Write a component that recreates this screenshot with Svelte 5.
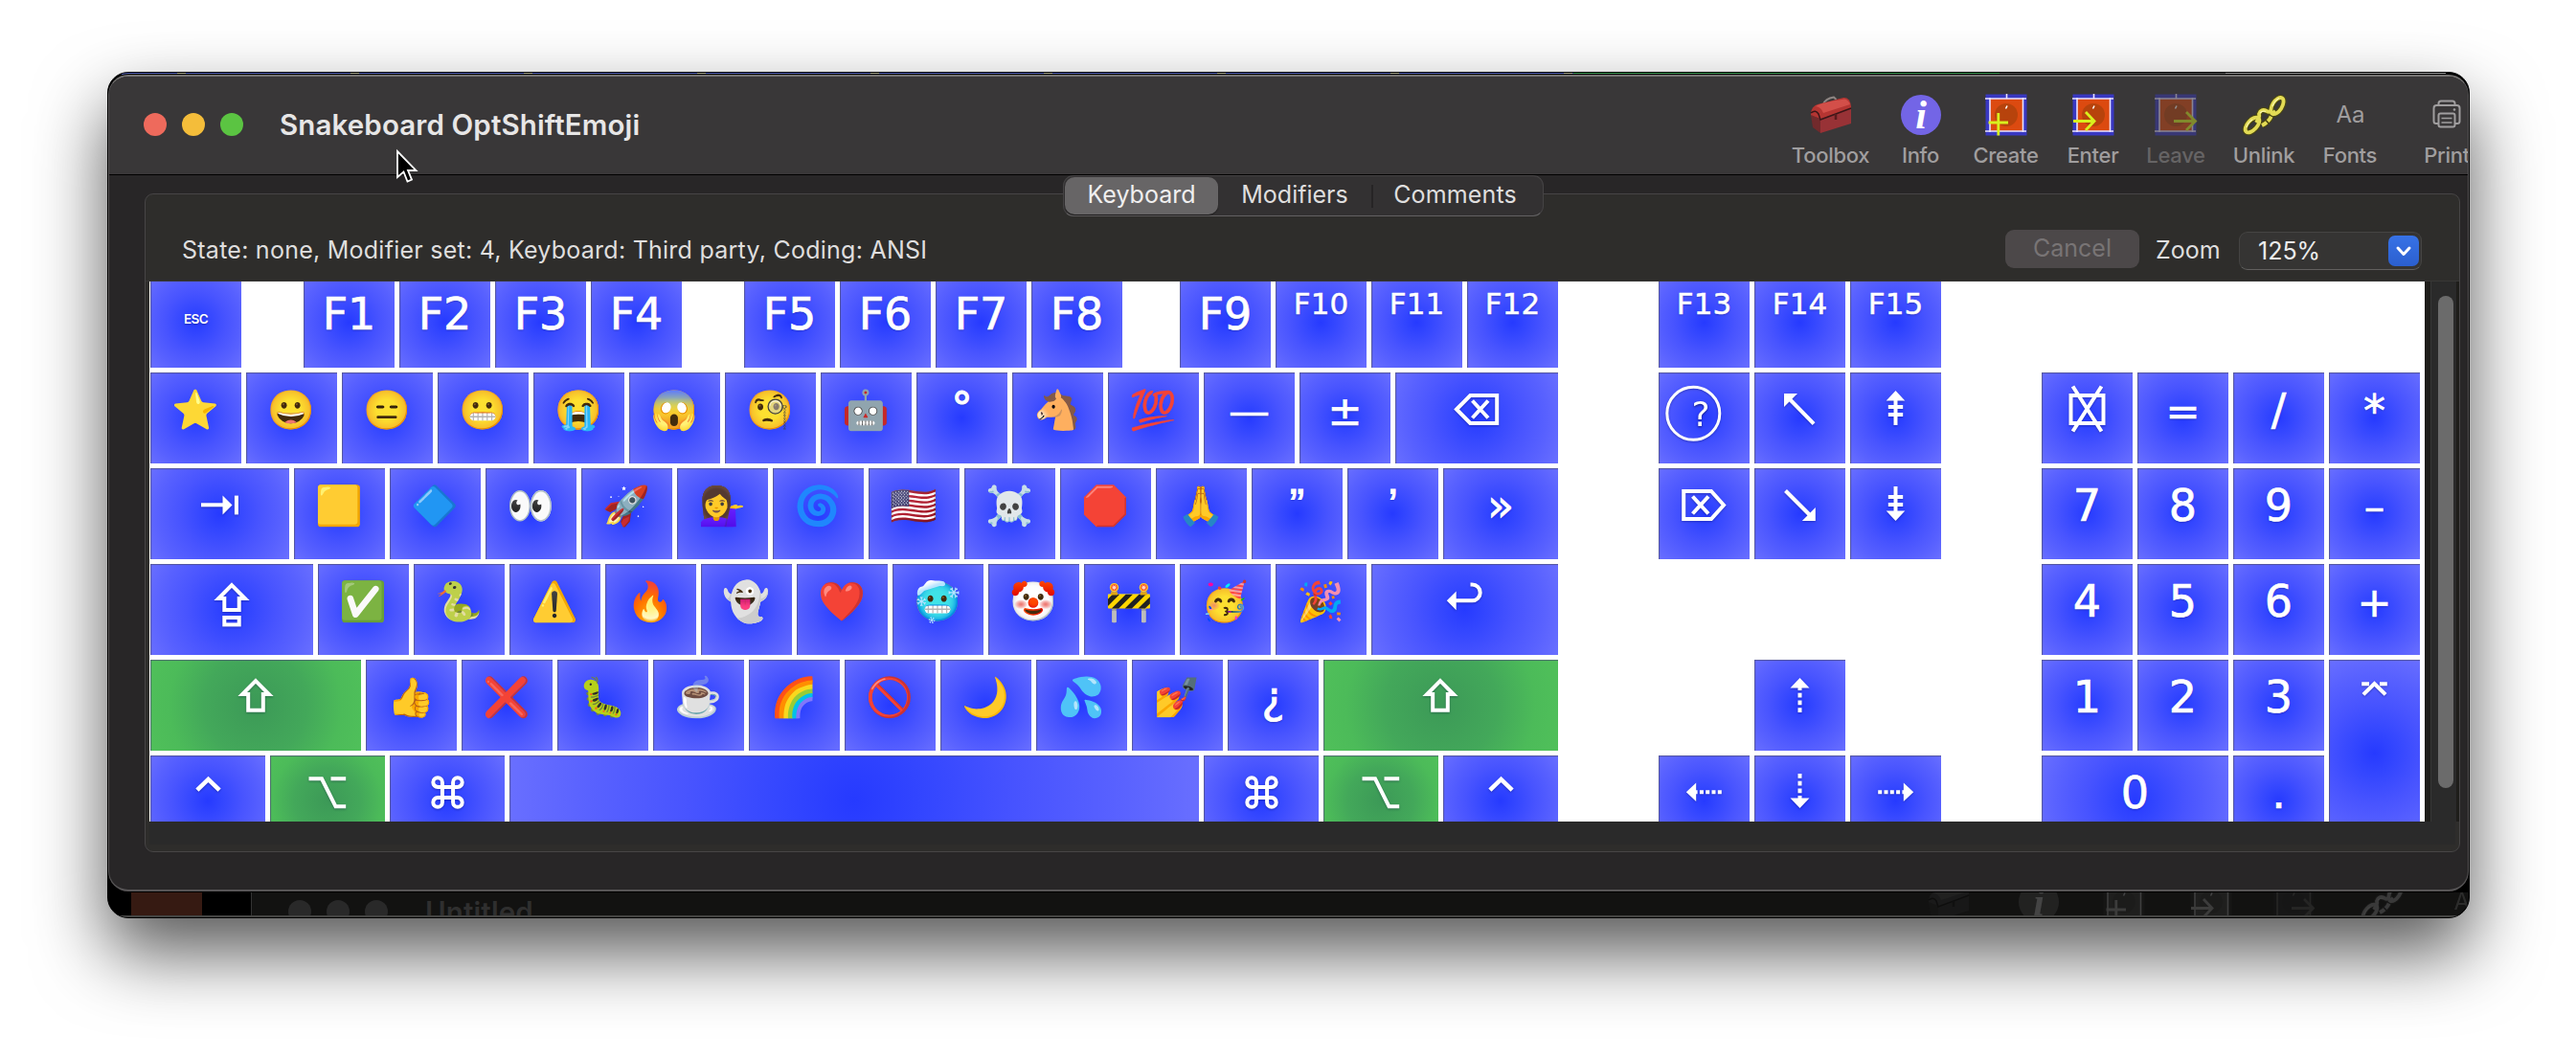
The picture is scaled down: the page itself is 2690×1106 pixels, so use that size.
<script>
  const em = (t, w) => ({ t, w, k: 'emoji' });
  const tx = (t, k = '', w) => ({ t, w, k });
  const ic = (icon, w, green = false) => ({ icon, w, green });
  const gap = (w) => ({ spacer: true, w });

  const mainRows = [
    [tx('ESC', 'esc'), gap(55), tx('F1'), tx('F2'), tx('F3'), tx('F4'), gap(55), tx('F5'), tx('F6'), tx('F7'), tx('F8'), gap(50), tx('F9'), tx('F10', 'small'), tx('F11', 'small'), tx('F12', 'small')],
    [em('⭐'), em('😀'), em('😑'), em('😬'), em('😭'), em('😱'), em('🧐'), em('🤖'), tx('°', 'degree'), em('🐴'), em('💯'), tx('—', 'op'), tx('±', 'op'), ic('backspace', 170)],
    [ic('tab', 145), em('🟨'), em('🔷'), em('👀'), em('🚀'), em('💁‍♀️'), em('🌀'), em('🇺🇸'), em('☠️'), em('🛑'), em('🙏'), tx('”', 'quote'), tx('’', 'quote'), tx('»', '', 120)],
    [ic('caps', 170), em('✅'), em('🐍'), em('⚠️'), em('🔥'), em('👻'), em('❤️'), em('🥶'), em('🤡'), em('🚧'), em('🥳'), em('🎉'), ic('return', 195)],
    [ic('shift', 220, true), em('👍'), em('❌'), em('🐛'), em('☕'), em('🌈'), em('🚫'), em('🌙'), em('💦'), em('💅'), tx('¿'), ic('shift', 245, true)],
    [ic('control', 120), ic('option', 120, true), ic('command', 120), tx('', '', 720), ic('command', 120), ic('option', 120, true), ic('control', 120)],
  ];

  const blank = { spacer: true };
  const navKeys = [
    tx('F13', 'small'), tx('F14', 'small'), tx('F15', 'small'),
    ic('help'), ic('home'), ic('pageup'),
    ic('fwddelete'), ic('end'), ic('pagedown'),
    blank, blank, blank,
    blank, ic('up'), blank,
    ic('left'), ic('down'), ic('right'),
  ];

  const padKeys = [
    blank, blank, blank, blank,
    ic('clear'), tx('=', 'op'), tx('/'), tx('*', 'star'),
    tx('7'), tx('8'), tx('9'), tx('–', 'op'),
    tx('4'), tx('5'), tx('6'), tx('+', 'op'),
    tx('1'), tx('2'), tx('3'), { ...ic('enter'), tall: true },
    { ...tx('0'), wide: true }, tx('.'),
  ];

  const tools = [
    { id: 'toolbox', label: 'Toolbox', w: 79, m: 0 },
    { id: 'info', label: 'Info', w: 39, m: 35 },
    { id: 'create', label: 'Create', w: 69, m: 35 },
    { id: 'enter', label: 'Enter', w: 55, m: 29 },
    { id: 'leave', label: 'Leave', w: 60, m: 29 },
    { id: 'unlink', label: 'Unlink', w: 64, m: 30 },
    { id: 'fonts', label: 'Fonts', w: 58, m: 29 },
    { id: 'print', label: 'Print', w: 50, m: 47 },
  ];

  const tabs = ['Keyboard', 'Modifiers', 'Comments'];
</script>

{#snippet glyph(name)}
  <svg class="glyph" viewBox="-47.5 0 95 95" width="95" height="95">
    {#if name === 'tab'}
      <path d="M-19.5 38.3H4" /><path class="fill" d="M3 28.5L13 38.4L3 48.4Z" /><path d="M17.4 28.6V48.4" />
    {:else if name === 'backspace'}
      <path d="M-21.5 38.5L-7.2 24H20.7V53H-7.2Z" /><path d="M-5 29.5L11.5 47.5M11.5 29.5L-5 47.5" />
    {:else if name === 'fwddelete'}
      <path d="M20.5 38.5L7.5 24H-21.3V53H7.5Z" /><path d="M-12 29.5L4.5 47.5M4.5 29.5L-12 47.5" />
    {:else if name === 'caps'}
      <path d="M-.5 22.2L13.3 36H7.2V48H-8.2V36H-14.3Z" /><rect x="-8.2" y="56" width="15.4" height="7.4" />
    {:else if name === 'shift'}
      <path d="M-.5 22.2L13.3 36H7.3V52.8H-8.3V36H-14.3Z" />
    {:else if name === 'return'}
      <path d="M-10 38.3H7.8A8.4 8.4 0 0 0 7.8 21.5H6" /><path class="fill" d="M-18.7 38.3L-8.8 28.5V48.2Z" />
    {:else if name === 'control'}
      <path class="bold" d="M-11.6 36.2L0 24.8L11.6 36.2" />
    {:else if name === 'option'}
      <path d="M-20 24.3H-6.5L8 53.3H18.7M3 24.3H18.7" />
    {:else if name === 'command'}
      <g transform="translate(0 38.5)">
        <path d="M-5.6-5.6H5.6V5.6H-5.6Z" />
        <path d="M-5.6-5.6H-10.4A4.8 4.8 0 1 1-5.6-10.4V-5.6" />
        <path d="M5.6-5.6H10.4A4.8 4.8 0 1 0 5.6-10.4V-5.6" />
        <path d="M-5.6 5.6H-10.4A4.8 4.8 0 1 0-5.6 10.4V5.6" />
        <path d="M5.6 5.6H10.4A4.8 4.8 0 1 1 5.6 10.4V5.6" />
      </g>
    {:else if name === 'help'}
      <circle cx="-11.2" cy="42.8" r="27.5" class="thin" /><text x="-3.5" y="56">?</text>
    {:else if name === 'home'}
      <path d="M-12 26.5L14.6 53.6" /><path class="fill" d="M-16.5 22H-2.5L-16.5 36Z" />
    {:else if name === 'end'}
      <path d="M-15 23.5L12 50.5" /><path class="fill" d="M16.3 55H2.3L16.3 41Z" />
    {:else if name === 'pageup'}
      <path d="M0 28V55M-7.7 36H7.7M-7.7 44H7.7" /><path class="fill" d="M0 19L9.8 29.5H-9.8Z" />
    {:else if name === 'pagedown'}
      <path d="M0 19V46M-7.7 30H7.7M-7.7 38H7.7" /><path class="fill" d="M0 55L9.8 44.5H-9.8Z" />
    {:else if name === 'up'}
      <path d="M0 55V28" stroke-dasharray="4.8 2.9" /><path class="fill" d="M0 19L10 29.5H-10Z" />
    {:else if name === 'down'}
      <path d="M0 19V46" stroke-dasharray="4.8 2.9" /><path class="fill" d="M0 55L10 44.5H-10Z" />
    {:else if name === 'left'}
      <path d="M18.3 38.3H-9" stroke-dasharray="4 2.3" /><path class="fill" d="M-18.7 38.3L-8.3 28.5V48.1Z" />
    {:else if name === 'right'}
      <path d="M-18.3 38.3H9" stroke-dasharray="4 2.3" /><path class="fill" d="M18.7 38.3L8.3 28.5V48.1Z" />
    {:else if name === 'clear'}
      <rect x="-17" y="24" width="34" height="29" /><path d="M-15 14.5L15 61.5M15 14.5L-15 61.5" />
    {:else if name === 'enter'}
      <path d="M-11.6 36.4L0 25L11.6 36.4M-13.3 25.3H-5.5M5.5 25.3H13.3" />
    {/if}
  </svg>
{/snippet}

{#snippet key(k)}
  {#if k.spacer}
    <div class="spacer" style:width={k.w ? k.w + 'px' : null}></div>
  {:else}
    <div class="key {k.k ?? ''}" class:green={k.green} class:tall={k.tall} class:wide={k.wide} style:width={k.w ? k.w + 'px' : null}>
      {#if k.icon}{@render glyph(k.icon)}{:else}{k.t}{/if}
    </div>
  {/if}
{/snippet}

{#snippet board(arrow)}
  <rect x="0.5" y="0.5" width="43" height="43" fill="#3a3af0" opacity=".75" />
  <rect x="5" y="5" width="34.5" height="34" fill="#dc4a10" />
  <ellipse cx="22" cy="22" rx="12" ry="12" fill="#8a3c08" opacity=".45" />
  <path d="M0 5H43M0 39H43M5 4V40M39.5 4V40M22.5 0V5" stroke="#e9e2ff" stroke-width="1.6" fill="none" />
  <path d="M21.5 15.5L23 12.5" stroke="#fff" stroke-width="1.6" />
  <path d={arrow} stroke="#d8f01e" stroke-width="2.8" fill="none" />
{/snippet}

{#snippet toolIcon(id)}
  <svg class="tool-icon" viewBox="0 0 44 44" width="44" height="44">
    {#if id === 'toolbox'}
      <path d="M14 11Q16 5 25 3.5L27.5 6" fill="none" stroke="#8d8583" stroke-width="2" />
      <path d="M1 20Q2 13 8 11L35 4Q42 3.500 43 13L43 16L11 27L1 23Z" fill="#b53532" />
      <path d="M6 13Q12 9 36 5.500Q40 6 42 11L14 20Q12 14 6 13Z" fill="#d34f49" />
      <path d="M1 22L11 26V41L3 35Z" fill="#722a2c" />
      <path d="M11 26L43 15V31L11 41Z" fill="#983236" />
      <path d="M1 20Q6 16 9 21L11 27L43 15" fill="none" stroke="#3b1618" stroke-width="1.500" />
      <path d="M27 21V27" stroke="#5a1a1c" stroke-width="2.500" />
    {:else if id === 'info'}
      <circle cx="22" cy="22" r="21" fill="#7365e6" />
      <text x="22" y="36" class="info-i">i</text>
    {:else if id === 'create'}
      {@render board('M3.500 30H24M13.800 20V43.500')}
    {:else if id === 'enter'}
      {@render board('M1 28.500H22.500M14 19L23 28.500L14 38')}
    {:else if id === 'leave'}
      <g opacity=".45">{@render board('M20 28.500H42M33 19L42.500 28.500L33 38')}</g>
    {:else if id === 'unlink'}
      <g fill="none" stroke="#4b4712" stroke-width="6">
        <ellipse cx="10" cy="32.500" rx="9.500" ry="5" transform="rotate(-48 10 32.500)" />
        <ellipse cx="36" cy="12.500" rx="9.500" ry="5" transform="rotate(-58 36 12.500)" />
        <path d="M14 30Q18 24 17 21Q19 15 25 18Q28 20 30 17M20 33Q26 30 29 25Q31 20 34 18" />
      </g>
      <g fill="none" stroke="#e3db55" stroke-width="3.800">
        <ellipse cx="10" cy="32.500" rx="9.500" ry="5" transform="rotate(-48 10 32.500)" />
        <path d="M14 30Q18 24 17 21Q19 15 25 18Q28 20 30 17" />
        <path d="M20 33Q26 30 29 25Q31 20 34 18" stroke-dasharray="6 1.500" />
        <ellipse cx="36" cy="12.500" rx="9.500" ry="5" transform="rotate(-58 36 12.500)" />
      </g>
      <g fill="none" stroke="#fbf7b0" stroke-width="1.200">
        <path d="M4 35Q5 30 10 27M31 13Q33 7 38 4.500M18 20Q21 17 24 18.500" />
      </g>
    {:else if id === 'fonts'}
      <text x="22.500" y="30" class="aa">Aa</text>
    {:else if id === 'print'}
      <g fill="none" stroke="#a09e9f" stroke-width="2" stroke-linejoin="round">
        <path d="M13.500 12V10Q13.500 7.500 16 7.500H28Q30.500 7.500 30.500 10V12" />
        <path d="M13 31H11Q8.500 31 8.500 28.500V15Q8.500 12 11.500 12H32.500Q35.500 12 35.500 15V28.500Q35.500 31 33 31H31" />
        <rect x="13.500" y="20.500" width="17" height="14" rx="2" />
        <path d="M16.500 25.500H27.500M16.500 30H27.500" stroke-width="1.700" />
      </g>
      <circle cx="30" cy="16.500" r="1.300" fill="#a09e9f" />
    {/if}
  </svg>
{/snippet}

{#snippet titlebar(title)}
  <header class="titlebar">
    <div class="lights"><i class="close"></i><i class="min"></i><i class="max"></i></div>
    <h1>{title}</h1>
    <nav class="toolbar">
      {#each tools as tool}
        <div class="tool" class:off={tool.id === 'leave'} style:width="{tool.w}px" style:margin-left="{tool.m}px">
          {@render toolIcon(tool.id)}
          <span>{tool.label}</span>
        </div>
      {/each}
    </nav>
  </header>
{/snippet}

<div class="desktop">
  <div class="stack">
    <div class="peek"><b class="blue"></b><b class="leaf"></b><b class="ash"></b><b class="pale"></b></div>

    <section class="window">
      {@render titlebar('Snakeboard OptShiftEmoji')}
      <div class="body">
        <div class="panel">
          <div class="tabs">
            {#each tabs as tab, i}
              <div class="tab t{i}" class:selected={i === 0}>{tab}</div>
            {/each}
          </div>
          <div class="bar">
            <span class="state">State: none, Modifier set: 4, Keyboard: Third party, Coding: ANSI</span>
            <button class="cancel" disabled>Cancel</button>
            <span class="zoom">Zoom</span>
            <div class="combo">
              <span>125%</span>
              <div class="drop">
                <svg viewBox="0 0 32 32" width="32" height="32"><path d="M10 13L16 19.500L22 13" fill="none" stroke="#fff" stroke-width="3" stroke-linecap="round" stroke-linejoin="round" /></svg>
              </div>
            </div>
          </div>
          <div class="scroller">
            <div class="view">
              <div class="board">
                <div class="main">
                  {#each mainRows as row}
                    <div class="row">{#each row as k}{@render key(k)}{/each}</div>
                  {/each}
                </div>
                <div class="grid nav">{#each navKeys as k}{@render key(k)}{/each}</div>
                <div class="grid pad">{#each padKeys as k}{@render key(k)}{/each}</div>
              </div>
            </div>
            <div class="track"><div class="thumb"></div></div>
          </div>
          <div class="hscroll"></div>
        </div>
      </div>
    </section>

    <div class="behind">
      <div class="orange"></div>
      <div class="other">{@render titlebar('Untitled')}</div>
    </div>
  </div>
  <svg class="cursor" viewBox="0 0 24 38" width="24" height="38">
    <path d="M2 3V30L8.500 24.500L12.500 34.500L17 32.600L13 23H21.500Z" fill="#000" stroke="#fff" stroke-width="1.800" stroke-linejoin="miter" />
  </svg>
</div>

<style>
  :global(body) { margin: 0; background: #fff; }
  .desktop {
    box-sizing: border-box; width: 2690px; height: 1106px; padding: 75px 111px 0 112px;
    background: #fff; overflow: hidden; position: relative;
    font-family: Inter, "Liberation Sans", sans-serif;
  }
  .stack {
    box-sizing: border-box; height: 884px; border: 1px solid #000; border-radius: 22px;
    background: #000; overflow: hidden; display: flex; flex-direction: column;
    box-shadow: 0 36px 76px rgba(0, 0, 0, .66);
  }
  .peek { height: 2px; flex: none; display: flex; padding-left: 14px; }
  .peek .blue { width: 1516px; background: repeating-linear-gradient(90deg, #5563b8 0 58px, #a5a58a 58px 67px, #5563b8 67px 181px); }
  .peek .leaf { width: 445px; background: #3f9a55; }
  .peek .ash { width: 236px; background: #555; }
  .peek .pale { width: 230px; background: #999; }

  .window {
    box-sizing: border-box; height: 853px; flex: none; overflow: hidden; border: solid #575556;
    border-width: 2px 1px; border-top-color: #757372; border-radius: 21px; background: #282627;
    box-shadow: 0 0 0 1px #000;
  }
  .titlebar {
    box-sizing: border-box; height: 103px; display: flex; background: #393738;
    border-bottom: 1px solid #000; padding-left: 36px;
  }
  .lights { display: flex; gap: 16px; padding-top: 38px; }
  .lights i { width: 24px; height: 24px; border-radius: 50%; }
  .close { background: #ee6a5c; }
  .min { background: #f4bd3a; }
  .max { background: #5bc442; }
  h1 {
    margin: 0 0 0 38px; width: 1580px; flex: none; padding-top: 30px; line-height: 40px;
    font-size: 29.500px; font-weight: 600; letter-spacing: .12px; color: #e7e6e6; white-space: nowrap;
  }
  .toolbar { display: flex; flex: none; padding-top: 18px; }
  .tool { flex: none; display: flex; flex-direction: column; align-items: center; gap: 6px; }
  .tool span { font-size: 22px; line-height: 28px; color: #a09e9f; white-space: nowrap; letter-spacing: -.3px; font-weight: 500; }
  .tool.off span { color: #666465; }
  .tool-icon { display: block; flex: none; overflow: visible; }
  .info-i { font: italic bold 42px "Liberation Serif", serif; fill: #fff; text-anchor: middle; }
  .aa { font-size: 24px; fill: #a09e9f; text-anchor: middle; }

  .body { padding: 19px 8px 0 37px; }
  .panel {
    box-sizing: border-box; height: 688px; border: 1.500px solid #474546; border-radius: 9px;
    background: #2e2d2b; display: flex; flex-direction: column;
  }
  .tabs {
    box-sizing: border-box; align-self: center; margin: -20px 0 0 2px; width: 502px; height: 43px; flex: none;
    display: flex; padding: 1px; border: 1px solid #454344; border-bottom-color: #636162; border-radius: 11px; background: #333132;
  }
  .tab { box-sizing: border-box; font-size: 25px; line-height: 37px; text-align: center; color: #dfdede; height: 39px; }
  .t0 { width: 160px; } .t1 { width: 160px; } .t2 { width: 178px; padding-right: 3px; letter-spacing: .15px; }
  .t2 { background: linear-gradient(#262425, #262425) no-repeat 0 8px / 2px 24px; }
  .selected { background: #676566; border-radius: 10px; color: #f0efef; box-shadow: 0 1px 1px #1d1c1c; }
  .bar { height: 68px; flex: none; display: flex; align-items: center; padding: 1px 0 0 38px; font-size: 25px; color: #dfdede; border-bottom: 1px solid #383736; box-sizing: border-box; }
  .state { width: 1904px; padding-top: 1px; font-size: 25px; letter-spacing: .25px; white-space: nowrap; }
  .cancel { width: 140px; height: 40px; border: 0; border-radius: 9px; background: #4c4849; color: #787475; font: inherit; padding: 0 0 3px; }
  .zoom { margin-left: 17px; width: 87px; padding-top: 1px; }
  .combo {
    box-sizing: border-box; width: 191px; height: 40px; margin-top: 4px; border: 1px solid #454443; border-bottom-color: #62605f;
    border-radius: 9px; background: #353433; display: flex; align-items: center; justify-content: space-between; padding: 0 2px 0 19px; color: #ececec;
  }
  .drop { width: 32px; height: 32px; border-radius: 7px; background: linear-gradient(#3772e6, #2b5fcf); }
  .drop svg { display: block; }

  .scroller { margin-left: 4px; height: 564px; flex: none; display: flex; background: #1e1d1a; }
  .view { width: 2376px; height: 564px; overflow: hidden; background: #fff; }
  .track { box-sizing: border-box; margin-left: 6px; width: 27px; background: #2a2a2a; border-left: 1px solid #383838; padding: 15px 0 0 7px; }
  .thumb { width: 16px; height: 514px; border-radius: 8px; background: #6b6b6b; }
  .hscroll { margin-left: 4px; width: 2408px; height: 24px; background: #2a2a2a; }

  .board { display: flex; gap: 105px; margin-top: -5px; padding-left: 1px; width: max-content; }
  .main { display: flex; flex-direction: column; gap: 5px; }
  .row { display: flex; gap: 5px; height: 95px; }
  .spacer { width: 95px; }
  .grid { display: grid; grid-auto-rows: 95px; gap: 5px; }
  .nav { grid-template-columns: repeat(3, 95px); }
  .pad { grid-template-columns: repeat(4, 95px); }
  .key {
    width: 95px; height: 95px; display: flex; justify-content: center; color: #fff; white-space: nowrap; overflow: hidden;
    font-family: "DejaVu Sans", "Noto Color Emoji", sans-serif; font-size: 46px; line-height: 78px;
    -webkit-text-stroke: .7px #fff;
    text-shadow: 0 1px 2px rgba(0, 0, 50, .35);
    background: radial-gradient(circle farthest-corner at center, #263aff 0%, #3346ff 20%, #4854ff 48%, #5861ff 75%, #696fff 100%);
    box-shadow: inset 1px 1px 1px rgba(80, 80, 120, .75);
  }
  .green { background: radial-gradient(circle farthest-corner at center, #3c9957 0%, #43a85a 45%, #4cbb59 75%, #50c05a 100%); }
  .tall { height: auto; grid-row: span 2; }
  .wide { width: auto; grid-column: span 2; }
  .small { font-size: 31px; line-height: 57px; -webkit-text-stroke: .5px #fff; }
  .esc { font-family: Inter, sans-serif; font-size: 13.500px; font-weight: 600; line-height: 88px; letter-spacing: -.6px; -webkit-text-stroke: 0; }
  .op { font-size: 43px; line-height: 80px; }
  .star { line-height: 81px; }
  .quote { font-family: "Liberation Sans", sans-serif; line-height: 77px; -webkit-text-stroke: 1px #fff; }
  .degree { font-size: 44px; line-height: 74px; -webkit-text-stroke: 1.200px #fff; }
  .emoji { font-family: "Noto Color Emoji", sans-serif; font-size: 40px; line-height: 80px; text-shadow: none; -webkit-text-stroke: 0; }
  .glyph { display: block; flex: none; fill: none; stroke: #fff; stroke-width: 4; filter: drop-shadow(0 1px 1px rgba(0, 0, 50, .3)); }
  .glyph .fill { fill: #fff; stroke: none; }
  .glyph .bold { stroke-width: 4.500; }
  .glyph .thin { stroke-width: 3; }
  .glyph text { fill: #fff; stroke: none; font-size: 36px; text-anchor: middle; -webkit-text-stroke: 0; }

  .behind { flex: 1; display: flex; overflow: hidden; margin-top: 1px; border-bottom: 2px solid #434341; min-height: 0; }
  .orange { margin-left: 24px; width: 74px; flex: none; background: #361a12; }
  .other { margin-left: 51px; flex: 1; border-left: 1px solid #333; overflow: hidden; }
  .other .titlebar { margin-top: -30px; background: #121211; padding-left: 38px; }
  .other .lights i { background: #292929; }
  .other h1 { margin-left: 39px; width: 1551px; color: #2f2f2f; }
  .other .tool-icon { filter: grayscale(1) brightness(.4); opacity: .6; }

  .cursor { position: absolute; left: 413px; top: 155px; }
</style>
